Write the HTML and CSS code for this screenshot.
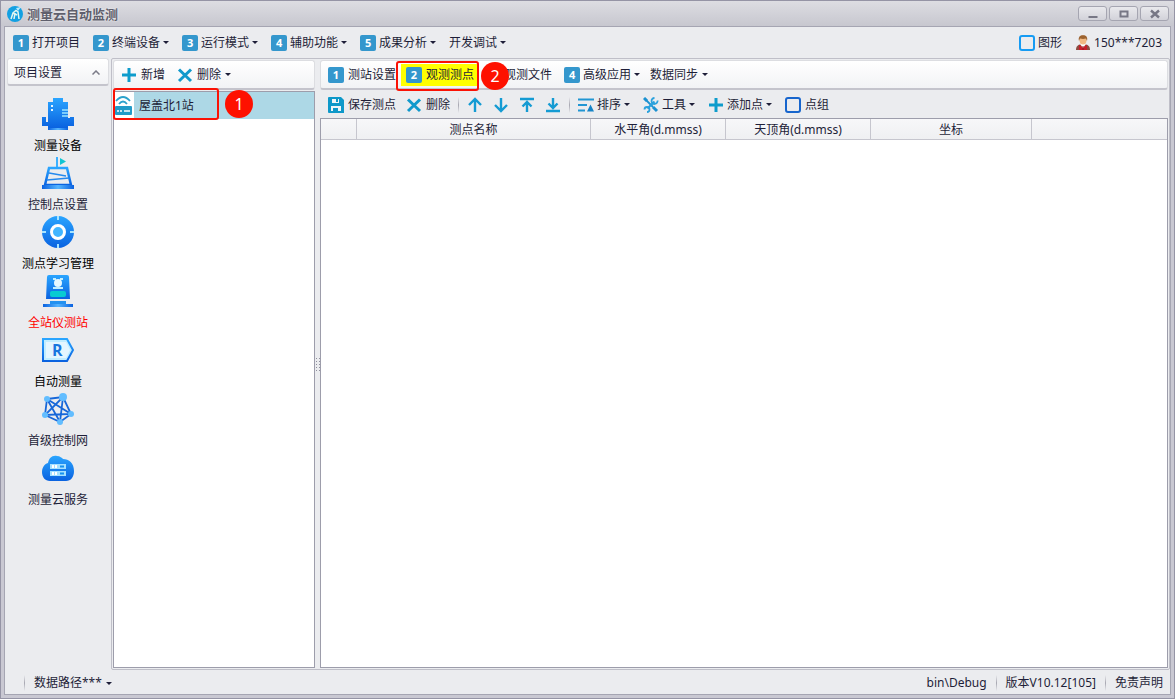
FILE: index.html
```html
<!DOCTYPE html>
<html lang="zh-CN">
<head>
<meta charset="utf-8">
<title>测量云自动监测</title>
<link rel="stylesheet" href="styles.css">
</head>
<body>
<svg class="defs" width="0" height="0" aria-hidden="true">
  <defs>
    <linearGradient id="blue" x1="0" y1="0" x2="0" y2="1"><stop offset="0" stop-color="#2aa5ff"/><stop offset="1" stop-color="#0a62e0"/></linearGradient>
    <linearGradient id="base" x1="0" y1="0" x2="1" y2="0"><stop offset="0" stop-color="#0b62e0"/><stop offset=".5" stop-color="#55b5ff"/><stop offset="1" stop-color="#0b62e0"/></linearGradient>
    <symbol id="cross" viewBox="0 0 16 16"><path d="M2 2.500 14 14M14 2.500 2 14" stroke="#1199cc" stroke-width="3" fill="none"/></symbol>
    <symbol id="plus" viewBox="0 0 16 16"><path d="M8 1v14M1 8h14" stroke="#0e9ccc" stroke-width="3" fill="none"/></symbol>
  </defs>
</svg>
<div class="window">
  <header class="titlebar">
    <svg class="logo" viewBox="0 0 16 16"><circle cx="8" cy="8" r="8" fill="#13a0e2"/><path d="M4 13 6 7 9 4.500 11 6 12 13M7 13 8 7M6 7 10 9" stroke="#e2f5f0" stroke-width="1.500" fill="none"/><path d="M9 2 14 1 11 5z" fill="#b8ebff"/></svg>
    <h1 class="title">测量云自动监测</h1>
    <div class="caption-buttons">
      <button class="caption" aria-label="最小化"><svg viewBox="0 0 12 10"><path d="M1.500 8h9" stroke="#777785" stroke-width="2"/></svg></button>
      <button class="caption" aria-label="最大化"><svg viewBox="0 0 12 10"><path d="M2.500 2.500h7v5h-7z" fill="none" stroke="#777785" stroke-width="2"/></svg></button>
      <button class="caption" aria-label="关闭"><svg viewBox="0 0 12 10"><path d="M2 1.500 10 8.500M10 1.500 2 8.500" stroke="#777785" stroke-width="2.400"/></svg></button>
    </div>
  </header>
  <div class="client">
    <nav class="menubar">
      <button class="item"><b class="num">1</b>打开项目</button>
      <button class="item"><b class="num">2</b>终端设备<i class="caret"></i></button>
      <button class="item"><b class="num">3</b>运行模式<i class="caret"></i></button>
      <button class="item"><b class="num">4</b>辅助功能<i class="caret"></i></button>
      <button class="item"><b class="num">5</b>成果分析<i class="caret"></i></button>
      <button class="item">开发调试<i class="caret"></i></button>
      <span class="spacer"></span>
      <label class="item check"><input type="checkbox" class="box box-light">图形</label>
      <button class="item user"><svg class="icon" viewBox="0 0 16 16"><path d="M1 15c0-4 2-5 5-6h4c3 1 5 2 5 6z" fill="#8c4b40"/><path d="M4 15V10l4 2 4-2v5z" fill="#c71f2b"/><path d="M5 9 8 13l3-4z" fill="#fff"/><path d="M7.500 11h1v4h-1z" fill="#901622"/><ellipse cx="8" cy="5" rx="3.500" ry="4.500" fill="#f1b983"/><path d="M4 6C3 2 5 .3 8 .3S13 2 12 6L11 3.500 8 4 5 3.500z" fill="#9c6330"/></svg>150***7203</button>
    </nav>
    <div class="body">
      <aside class="sidebar">
        <button class="group">项目设置<svg class="chevron" viewBox="0 0 8 5"><path d="M.5 4.500 4 1 7.500 4.500" fill="none" stroke="#7b7b88" stroke-width="1.500"/></svg></button>
        <button class="nav black"><svg viewBox="0 0 32 32"><path d="M11 0h10v4h5v16h2v-1h4v9h-6v2H6v-2H0v-9h4v5h2V4h5z" fill="url(#blue)"/><path d="M6 30h20v2H6z" fill="url(#base)"/><path d="M9 7h2v2H9zM9 11h2v2H9z" fill="#e8f7ff"/><path d="M20 12h6M20 15h6M20 18h6" stroke="#9be5ff" stroke-width="1.500"/></svg><span>测量设备</span></button>
        <button class="nav"><svg viewBox="0 0 32 32"><path d="M15 0v11" stroke="#3cb0ff" stroke-width="2"/><path d="M18 1 24 4.500 18 8z" fill="#11c5d2"/><path d="M7 11h18l4 17H3z" fill="none" stroke="url(#blue)" stroke-width="2.500"/><path d="M7 16l17 3M5 23l22-2" fill="none" stroke="#2489ee" stroke-width="1.500"/><path d="M0 28h32v4H0z" fill="url(#base)"/></svg><span>控制点设置</span></button>
        <button class="nav black"><svg viewBox="0 0 32 32"><circle cx="16" cy="16" r="16" fill="url(#blue)"/><circle cx="16" cy="16" r="6.500" fill="#42b5ff" stroke="#fff" stroke-width="3"/><path d="M16 0v4M16 28v4M0 16h4M28 16h4" stroke="#a7e4ff" stroke-width="2"/></svg><span>测点学习管理</span></button>
        <button class="nav active"><svg viewBox="0 0 32 32"><path d="M7 0h18q2 0 2 2l1 22H4L5 2q0-2 2-2z" fill="url(#blue)"/><path d="M11 4h3M18 4h3M11 13h10" stroke="#c1efff" stroke-width="2"/><circle cx="16" cy="8" r="4" fill="#e6f8ff"/><rect x="8" y="16" width="16" height="6" rx="2" fill="#08cbd2"/><path d="M8 26h16v3H8z" fill="#2491f0"/><path d="M1 29h30v3H1z" fill="url(#base)"/></svg><span>全站仪测站</span></button>
        <button class="nav black"><svg viewBox="0 0 32 32"><path d="M1 5h24l6 11-6 11H1z" fill="#c1edff" stroke="url(#blue)" stroke-width="2"/><path d="M4 8h20l4 8-4 8H4z" fill="#e4f6ff"/><text x="10" y="22" class="letter">R</text></svg><span>自动测量</span></button>
        <button class="nav"><svg viewBox="0 0 32 32"><path d="M5 6 21 4 29 21 18 29 3 22zM5 6 29 21 3 22 21 4 18 29z" fill="none" stroke="#1767d9" stroke-width="1.800"/><g fill="#62bdff"><circle cx="5" cy="6" r="3"/><circle cx="21" cy="4" r="4"/><circle cx="29" cy="21" r="3"/><circle cx="18" cy="29" r="3"/><circle cx="3" cy="22" r="3"/></g></svg><span>首级控制网</span></button>
        <button class="nav"><svg viewBox="0 0 32 32"><path d="M8 29c-5 0-8-4-8-9 0-4 2-8 6-9C7 6 10 3 15 4c3 0 5 2 6 3 6 0 11 4 11 12 0 6-3 10-8 10z" fill="url(#blue)"/><path d="M8 12h16v5H8zM8 19h16v5H8z" fill="#a5e1ff"/><path d="M10 13h2v3h-2zM13 13h2v3h-2zM10 20h2v3h-2zM13 20h2v3h-2z" fill="#fff"/><path d="M18 14.500h4M18 21.500h4" stroke="#1692f0" stroke-width="2"/></svg><span>测量云服务</span></button>
      </aside>
      <main class="workspace">
        <section class="stations">
          <div class="toolbar raised compact">
            <button class="item"><svg class="icon"><use href="#plus"/></svg>新增</button>
            <button class="item"><svg class="icon"><use href="#cross"/></svg>删除<i class="caret"></i></button>
          </div>
          <div class="list">
            <button class="station">
              <svg class="station-icon" viewBox="0 0 20 27"><path d="M0 0h20v27H0z" fill="#fff"/><path d="M2 9Q9 1 16 9M5 12q4-5 8 0" fill="none" stroke="#2ca2cc" stroke-width="1.800"/><rect x="1" y="14" width="17" height="9" rx="1" fill="#229bc8"/><path d="M3 19h2M6 19h2M10 19h6" stroke="#fff" stroke-width="1.500"/></svg>
              <span>屋盖北1站</span>
              <span class="outline"></span><span class="marker marker-list">1</span>
            </button>
          </div>
        </section>
        <div class="splitter"></div>
        <section class="points">
          <div class="toolbar raised tabs">
            <button class="item"><b class="num">1</b>测站设置</button>
            <button class="item current"><b class="num">2</b>观测测点<span class="outline"></span><span class="marker marker-tab">2</span></button>
            <button class="item"><b class="num">3</b>观测文件</button>
            <button class="item drop"><b class="num">4</b>高级应用<i class="caret"></i></button>
            <button class="item">数据同步<i class="caret"></i></button>
          </div>
          <div class="toolbar tools">
            <button class="item"><svg class="icon" viewBox="0 0 16 16"><path d="M1 0h12l3 3v13H1q-1 0-1-1V1q0-1 1-1z" fill="#0d98c9"/><path d="M4 2h7v4H4zM3 9h10v5H3z" fill="#eef5f8"/><path d="M8 2h2v3H8zM5 11h5v3H5z" fill="#0d98c9"/></svg>保存测点</button>
            <button class="item"><svg class="icon"><use href="#cross"/></svg>删除</button>
            <span class="sep"></span>
            <button class="item" aria-label="上移"><svg class="icon" viewBox="0 0 16 16"><path d="M8 15V2M2 8 8 2l6 6" class="arrow"/></svg></button>
            <button class="item" aria-label="下移"><svg class="icon" viewBox="0 0 16 16"><path d="M8 1v13M2 8l6 6 6-6" class="arrow"/></svg></button>
            <button class="item" aria-label="移到顶部"><svg class="icon" viewBox="0 0 16 16"><path d="M8 15V5M3.500 9.500 8 5l4.500 4.500M1 2h14" class="arrow"/></svg></button>
            <button class="item" aria-label="移到底部"><svg class="icon" viewBox="0 0 16 16"><path d="M8 1v10M3.500 6.500 8 11l4.500-4.500M1 14h14" class="arrow"/></svg></button>
            <span class="sep"></span>
            <button class="item drop"><svg class="icon" viewBox="0 0 16 16"><path d="M0 2.500h16M0 8h9M0 13.500h7" stroke="#2196d3" stroke-width="1.800"/><path d="M9 14.500 12.500 7.500 16 14.500z" fill="#1684c7"/></svg>排序<i class="caret"></i></button>
            <button class="item drop"><svg class="icon" viewBox="0 0 16 16"><path d="M2 2 10 10" stroke="#1b91d1" stroke-width="1.800"/><path d="M1 1 4 4M10 10 14 14" stroke="#1b91d1" stroke-width="3"/><path d="M4.500 11.500 11.500 4.500" stroke="#2aa1dd" stroke-width="2.200"/><path d="M14.500 3.500a3 3 0 1 1-3-2.500M1.500 12.500a2.500 2.500 0 1 1 2.500 2.500" fill="none" stroke="#2aa1dd" stroke-width="1.800"/></svg>工具<i class="caret"></i></button>
            <button class="item drop"><svg class="icon"><use href="#plus"/></svg>添加点<i class="caret"></i></button>
            <label class="item check"><input type="checkbox" class="box">点组</label>
          </div>
          <div class="grid">
            <table>
              <colgroup><col class="c-mark"><col class="c-name"><col class="c-h"><col class="c-v"><col class="c-xyz"><col></colgroup>
              <thead><tr><th></th><th>测点名称</th><th>水平角(d.mmss)</th><th>天顶角(d.mmss)</th><th>坐标</th><th></th></tr></thead>
              <tbody></tbody>
            </table>
          </div>
        </section>
      </main>
    </div>
    <footer class="status">
      <span class="sep"></span>
      <button class="item">数据路径***<i class="caret"></i></button>
      <span class="spacer"></span>
      <span>bin\Debug</span>
      <span class="sep"></span>
      <span>版本V10.12[105]</span>
      <span class="sep"></span>
      <button class="item">免责声明</button>
    </footer>
  </div>
</div>
</body>
</html>
```

FILE: styles.css
```css
* { box-sizing: border-box; }

body {
  margin: 0;
  font: 12px/16px "Noto Sans", "Noto Sans CJK SC", sans-serif;
  color: #1e1e38;
}

button {
  font: inherit;
  color: inherit;
  background: none;
  border: 0;
  padding: 0;
  text-align: left;
}

.defs { position: absolute; }

.window {
  height: 100vh;
  display: flex;
  flex-direction: column;
  padding: 0 3px 3px;
  border: 1px solid #9594a5;
  background: #c9c8d2;
}

.titlebar {
  display: flex;
  align-items: center;
  height: 25px;
  flex: none;
  margin: 0 -3px;
  padding: 0 5px 0 6px;
  background: linear-gradient(#dddde2, #c7c7cf);
}

.logo { width: 16px; height: 16px; }

.title {
  flex: 1;
  margin: 0;
  padding-left: 4px;
  font-size: 13px;
  font-weight: 700;
  color: #5f5f6c;
  text-shadow: 0 0 2px #fff;
}

.caption-buttons { display: flex; gap: 2px; }

.caption {
  display: flex;
  align-items: center;
  justify-content: center;
  width: 29px;
  height: 15px;
  border: 1px solid #a5a5b1;
  border-radius: 3px;
  background: linear-gradient(#e9e9ed, #d2d2d9);
}

.caption svg { width: 12px; height: 10px; }

.client {
  flex: 1;
  min-height: 0;
  display: flex;
  flex-direction: column;
  border: 1px solid #a5a5b2;
  background: #ebecef;
}

.menubar {
  display: flex;
  align-items: center;
  gap: 13px;
  height: 31px;
  flex: none;
  padding: 0 8px;
}

.spacer { flex: 1; }

.item {
  display: flex;
  align-items: center;
  gap: 4px;
  white-space: nowrap;
}

.menubar .item { gap: 3px; }

.num {
  width: 16px;
  height: 16px;
  border-radius: 2px;
  background: #3497cd;
  color: #fff;
  font-size: 11px;
  text-align: center;
}

.caret {
  border: 3px solid transparent;
  border-top-color: #1e1e38;
  border-bottom: 0;
}

.icon { width: 16px; height: 16px; flex: none; }

.box {
  appearance: none;
  width: 16px;
  height: 16px;
  margin: 0;
  border: 2px solid #1765cd;
  border-radius: 3px;
}

.box-light { border-color: #169bf3; }

.body { flex: 1; min-height: 0; display: flex; }

.sidebar {
  width: 106px;
  flex: none;
  display: flex;
  flex-direction: column;
  padding: 0 2px;
}

.group {
  display: flex;
  align-items: center;
  justify-content: space-between;
  height: 28px;
  padding: 2px 8px 0 6px;
  margin-bottom: 12px;
}

.group,
.raised {
  border: 1px solid #dcdde1;
  border-bottom: 2px solid #c4c4cc;
  border-radius: 3px;
  background: linear-gradient(#fff, #f2f3f5);
}

.chevron { width: 8px; height: 5px; }

.nav {
  display: flex;
  flex-direction: column;
  align-items: center;
  gap: 8px;
  padding-bottom: 3px;
}

.nav svg { width: 32px; height: 32px; }
.black { color: #000; }
.active { color: #f00; }
.letter { font: bold 16px "Open Sans", sans-serif; fill: #1976df; }

.workspace {
  flex: 1;
  min-width: 0;
  display: flex;
  padding: 1px;
  border: 1px solid #bfbfc8;
  border-radius: 2px;
}

.stations { width: 202px; flex: none; display: flex; flex-direction: column; }

.toolbar {
  display: flex;
  align-items: center;
  flex: none;
  height: 30px;
}

.compact { gap: 12px; padding: 0 7px; margin-bottom: 1px; }

.list,
.grid {
  flex: 1;
  min-height: 0;
  border: 1px solid #9d9dab;
  background: #fff;
}

.station {
  position: relative;
  display: flex;
  align-items: center;
  gap: 5px;
  width: 100%;
  height: 27px;
  background: #add8e6;
}

.station-icon { width: 20px; height: 27px; }

.outline {
  position: absolute;
  inset: -4px 95px -1px -1px;
  border: 2px solid #fb1205;
  border-radius: 3px;
}

.marker {
  position: absolute;
  z-index: 1;
  width: 28px;
  height: 28px;
  border-radius: 50%;
  background: #fe1100;
  color: #fff;
  font-size: 16px;
  line-height: 28px;
  text-align: center;
}

.marker-list { left: 111px; top: -2px; }

.splitter {
  width: 5px;
  flex: none;
  align-self: center;
  height: 14px;
  background: radial-gradient(circle, #8f8f9d 1px, transparent 1px) 0 0 / 3px 3px;
}

.points { flex: 1; min-width: 0; display: flex; flex-direction: column; }

.tabs { gap: 10px; padding: 0 7px; }
.tabs .drop { margin: 0 0 0 2px; }

.current {
  position: relative;
  margin: 0 -5px;
  padding: 3px 5px;
  background: #ff0;
}

.current .outline { inset: -3px 0 -5px -5px; }
.marker-tab { left: 80px; top: -2px; }

.tools { height: 28px; gap: 10px; padding: 1px 8px 0; }
.tools .sep { margin: 0 -2px; }

.drop { gap: 3px; margin-right: 3px; }

.arrow { fill: none; stroke: #149bd3; stroke-width: 2.4; }

.sep {
  width: 1px;
  height: 16px;
  background: linear-gradient(transparent, #a7a7b1, transparent);
}

table {
  width: 100%;
  table-layout: fixed;
  border-collapse: separate;
  border-spacing: 0;
}

th {
  height: 21px;
  padding: 1px 0 0;
  font-weight: 400;
  line-height: 16px;
  border-right: 1px solid #c6c6ce;
  border-bottom: 1px solid #c6c6ce;
  background: linear-gradient(#f7f7f9, #eff0f2);
}

th:last-child { border-right: 0; }

.c-mark { width: 36px; }
.c-name { width: 234px; }
.c-h { width: 135px; }
.c-v { width: 145px; }
.c-xyz { width: 161px; }

.status {
  display: flex;
  align-items: center;
  gap: 9px;
  height: 24px;
  flex: none;
  padding: 2px 7px 0 19px;
}
```
